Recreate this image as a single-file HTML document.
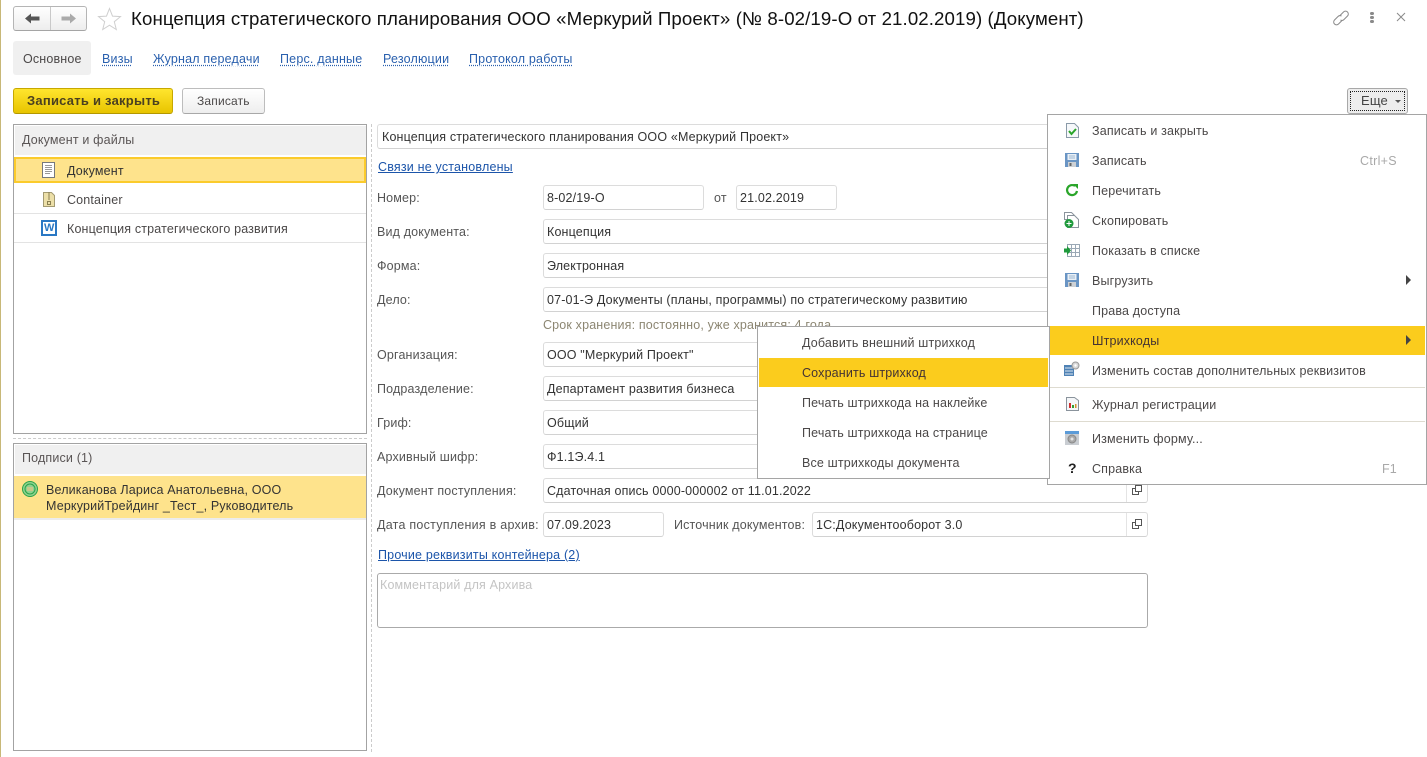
<!DOCTYPE html>
<html lang="ru"><head><meta charset="utf-8"><title>Документ</title>
<style>
html,body{margin:0;padding:0;background:#fff}
#p{position:relative;width:1427px;height:757px;overflow:hidden;background:#fff;font-family:"Liberation Sans",Arial,sans-serif;font-size:12.5px;color:#4b4848}
#p div,#p a,#p svg{position:absolute}
.t{white-space:nowrap;line-height:16px;height:16px;letter-spacing:.16px}
.d{color:#333}
.l{color:#1c55aa;text-decoration:underline;letter-spacing:.19px}
.tb{color:#2a60ae;text-decoration:underline dotted #2a60ae;text-underline-offset:2px;line-height:14px;white-space:nowrap;letter-spacing:.19px}
.f{box-sizing:border-box;background:#fff;border:1px solid #dcdcdc;border-radius:3px;height:25px;border-bottom-color:#d2d2d2}
.f span{position:absolute;left:3px;top:4px;white-space:nowrap;line-height:16px;color:#333;letter-spacing:.16px}
.lb{color:#555}
.m{color:#4b4848}
</style></head><body><div id="p">
<div style="left:0;top:0;width:1px;height:757px;background:#c8b878"></div>

<!-- nav -->
<div style="left:13px;top:6px;width:74px;height:25px;box-sizing:border-box;border:1px solid #b5b5b5;border-bottom-color:#a5a5a5;border-radius:3px;background:linear-gradient(#fff,#ededed)"></div>
<div style="left:50px;top:7px;width:1px;height:23px;background:#c9c9c9"></div>
<svg style="left:24px;top:12px" width="17" height="13" viewBox="0 0 17 13"><path d="M1 6.500L7 1.500v3h8.500v4H7v3z" fill="#555"/></svg>
<svg style="left:60px;top:12px" width="17" height="13" viewBox="0 0 17 13"><path d="M16 6.500L10 1.500v3H1.500v4H10v3z" fill="#aaa"/></svg>
<svg style="left:97px;top:7px" width="26" height="24" viewBox="0 0 26 24"><path d="M12.500 1.500l3 7.600 8 .5-6.200 5.100 2 7.800-6.800-4.300-6.800 4.300 2-7.800L1.500 9.600l8-.5z" fill="#fff" stroke="#cfcfcf"/></svg>
<div class="t" style="left:131px;top:8px;height:22px;line-height:22px;font-size:18.67px;color:#111;letter-spacing:.1px">Концепция стратегического планирования ООО «Меркурий Проект» (№ 8-02/19-О от 21.02.2019) (Документ)</div>
<svg style="left:1332px;top:9px" width="18" height="18" viewBox="0 0 18 18" fill="none" stroke="#8a8a8a" stroke-width="1"><path d="M8 6.500L11.500 3a2.800 2.800 0 0 1 4 4l-3.500 3.500a2.800 2.800 0 0 1-3.500.4"/><path d="M10 11.500L6.500 15a2.800 2.800 0 0 1-4-4L6 7.500a2.800 2.800 0 0 1 3.500-.4"/></svg>
<div style="left:1370px;top:12px;width:4px;height:3px;background:#8a8a8a;border-radius:2px"></div>
<div style="left:1370px;top:16px;width:4px;height:3px;background:#8a8a8a;border-radius:2px"></div>
<div style="left:1370px;top:20px;width:4px;height:3px;background:#8a8a8a;border-radius:2px"></div>
<svg style="left:1395px;top:11px" width="12" height="12" viewBox="0 0 12 12"><path d="M2 2l8 8M10 2l-8 8" stroke="#8a8a8a" stroke-width="1"/></svg>

<!-- tabs -->
<div style="left:13px;top:41px;width:78px;height:34px;background:#f0f0f0;border-radius:3px"></div>
<div class="t" style="left:23px;top:51px">Основное</div>
<div class="tb" style="left:102px;top:52px">Визы</div>
<div class="tb" style="left:153px;top:52px">Журнал передачи</div>
<div class="tb" style="left:280px;top:52px">Перс. данные</div>
<div class="tb" style="left:383px;top:52px">Резолюции</div>
<div class="tb" style="left:469px;top:52px">Протокол работы</div>

<!-- buttons -->
<div style="left:13px;top:88px;width:160px;height:26px;box-sizing:border-box;border:1px solid #c7a800;border-bottom-color:#b39700;border-radius:3px;background:linear-gradient(#ffe52e,#e8c400)"></div>
<div class="t" style="left:27px;top:93px;font-size:13px;font-weight:bold;color:#4a4020;letter-spacing:.24px">Записать и закрыть</div>
<div style="left:182px;top:88px;width:83px;height:26px;box-sizing:border-box;border:1px solid #bdbdbd;border-bottom-color:#a8a8a8;border-radius:3px;background:linear-gradient(#fff,#eee)"></div>
<div class="t" style="left:197px;top:93px;font-size:12px;letter-spacing:.18px">Записать</div>
<div style="left:1347px;top:88px;width:61px;height:26px;box-sizing:border-box;border:1px solid #a8a8a8;border-radius:3px;background:#ededed"></div>
<div style="left:1350px;top:91px;width:55px;height:20px;box-sizing:border-box;border:1px dotted #222"></div>
<div class="t" style="left:1361px;top:93px;font-size:13px;color:#444">Еще</div>
<svg style="left:1395px;top:100px" width="7" height="4"><path d="M0 0h6L3 3z" fill="#555"/></svg>

<!-- left panel 1 -->
<div style="left:13px;top:124px;width:354px;height:310px;box-sizing:border-box;border:1px solid #a3a3a3;background:#fff"></div>
<div style="left:15px;top:126px;width:351px;height:29px;background:#f0f0f0"></div>
<div class="t" style="left:22px;top:132px;color:#5a5555">Документ и файлы</div>
<div style="left:14px;top:157px;width:352px;height:26px;box-sizing:border-box;border:2px solid #fbcb2c;background:#fee38c"></div>
<svg style="left:42px;top:162px" width="13" height="16" viewBox="0 0 13 16"><rect x=".5" y=".5" width="12" height="15" fill="#fff" stroke="#76797c"/><path d="M3 3.500h7M3 5.500h7M3 7.500h7M3 9.500h7M3 11.500h5" stroke="#999"/></svg>
<div class="t d" style="left:67px;top:163px">Документ</div>
<div style="left:14px;top:213px;width:352px;height:1px;background:#e3e3e3"></div>
<svg style="left:43px;top:192px" width="12" height="15" viewBox="0 0 12 15"><path d="M.5.500h8l3 3v11H.5z" fill="#ecdfa8" stroke="#a39a72"/><path d="M5 1h2M5 3h2M5 5h2M5 7h2" stroke="#8a7f50"/><rect x="4.500" y="9.500" width="3" height="3" fill="none" stroke="#8a7f50"/></svg>
<div class="t" style="left:67px;top:192px">Container</div>
<div style="left:14px;top:242px;width:352px;height:1px;background:#e3e3e3"></div>
<div style="left:41px;top:220px;width:16px;height:16px;box-sizing:border-box;border:2px solid #2a78c4;background:#fff"></div>
<div style="left:44px;top:223px;font:bold 11px/11px 'Liberation Sans',sans-serif;color:#2a78c4;white-space:nowrap">W</div>
<div class="t" style="left:67px;top:221px">Концепция стратегического развития</div>

<!-- splitters -->
<div style="left:13px;top:438px;width:354px;border-top:1px dashed #ccc"></div>
<div style="left:371px;top:124px;height:628px;border-left:1px dashed #ccc"></div>

<!-- left panel 2 -->
<div style="left:13px;top:443px;width:354px;height:308px;box-sizing:border-box;border:1px solid #a3a3a3;background:#fff"></div>
<div style="left:15px;top:445px;width:351px;height:29px;background:#f0f0f0"></div>
<div class="t" style="left:22px;top:450px;color:#5a5555">Подписи (1)</div>
<div style="left:14px;top:476px;width:352px;height:42px;background:#fee38c"></div>
<div style="left:14px;top:518px;width:352px;height:2px;background:#ececec"></div>
<svg style="left:22px;top:481px" width="16" height="16" viewBox="0 0 16 16" fill="none"><circle cx="8" cy="8" r="7.500" fill="#8fd28f" stroke="#2aa34a"/><circle cx="8" cy="8" r="5" stroke="#2aa34a"/><rect x="5" y="6" width="6" height="4" fill="#c8c88a"/></svg>
<div class="t d" style="left:46px;top:482px">Великанова Лариса Анатольевна, ООО</div>
<div class="t d" style="left:46px;top:498px">МеркурийТрейдинг _Тест_, Руководитель</div>

<!-- form -->
<div class="f" style="left:377px;top:124px;width:771px"><span style="left:4px">Концепция стратегического планирования ООО «Меркурий Проект»</span></div>
<div class="t l" style="left:378px;top:159px">Связи не установлены</div>

<div class="t lb" style="left:377px;top:190px">Номер:</div>
<div class="f" style="left:543px;top:185px;width:161px"><span>8-02/19-О</span></div>
<div class="t lb" style="left:714px;top:190px">от</div>
<div class="f" style="left:736px;top:185px;width:101px"><span>21.02.2019</span></div>

<div class="t lb" style="left:377px;top:224px">Вид документа:</div>
<div class="f" style="left:543px;top:219px;width:605px"><span>Концепция</span></div>
<div class="t lb" style="left:377px;top:258px">Форма:</div>
<div class="f" style="left:543px;top:253px;width:605px"><span>Электронная</span></div>
<div class="t lb" style="left:377px;top:292px">Дело:</div>
<div class="f" style="left:543px;top:287px;width:605px"><span>07-01-Э Документы (планы, программы) по стратегическому развитию</span></div>
<div class="t" style="left:543px;top:317px;color:#8c8672">Срок хранения: постоянно, уже хранится: 4 года</div>
<div class="t lb" style="left:377px;top:347px">Организация:</div>
<div class="f" style="left:543px;top:342px;width:605px"><span>ООО "Меркурий Проект"</span></div>
<div class="t lb" style="left:377px;top:381px">Подразделение:</div>
<div class="f" style="left:543px;top:376px;width:605px"><span>Департамент развития бизнеса</span></div>
<div class="t lb" style="left:377px;top:415px">Гриф:</div>
<div class="f" style="left:543px;top:410px;width:605px"><span>Общий</span></div>
<div class="t lb" style="left:377px;top:449px">Архивный шифр:</div>
<div class="f" style="left:543px;top:444px;width:605px"><span>Ф1.1Э.4.1</span></div>
<div class="t lb" style="left:377px;top:483px">Документ поступления:</div>
<div class="f" style="left:543px;top:478px;width:605px"><span>Сдаточная опись 0000-000002 от 11.01.2022</span></div>
<div style="left:1126px;top:479px;width:1px;height:23px;background:#e4e4e4"></div>
<svg style="left:1132px;top:485px" width="11" height="11" viewBox="0 0 11 11" fill="none" stroke="#555"><rect x="3.500" y=".5" width="6" height="6" fill="#fff"/><path d="M3.500 3.500H.5v6h6v-3"/></svg>

<div class="t lb" style="left:377px;top:517px;letter-spacing:.25px">Дата поступления в архив:</div>
<div class="f" style="left:543px;top:512px;width:121px"><span>07.09.2023</span></div>
<div class="t lb" style="left:674px;top:517px">Источник документов:</div>
<div class="f" style="left:812px;top:512px;width:336px"><span>1С:Документооборот 3.0</span></div>
<div style="left:1126px;top:513px;width:1px;height:23px;background:#e4e4e4"></div>
<svg style="left:1132px;top:519px" width="11" height="11" viewBox="0 0 11 11" fill="none" stroke="#555"><rect x="3.500" y=".5" width="6" height="6" fill="#fff"/><path d="M3.500 3.500H.5v6h6v-3"/></svg>

<div class="t l" style="left:378px;top:547px">Прочие реквизиты контейнера (2)</div>
<div style="left:377px;top:573px;width:771px;height:55px;box-sizing:border-box;border:1px solid #aaa;border-radius:3px;background:#fff"></div>
<div class="t" style="left:380px;top:577px;color:#c4c4c4">Комментарий для Архива</div>

<!-- main menu -->
<div style="left:1047px;top:114px;width:380px;height:371px;box-sizing:border-box;border:1px solid #a5a5a5;background:#fff"></div>
<div style="left:1050px;top:326px;width:375px;height:29px;background:#fbcc1d"></div>
<div style="left:1050px;top:387px;width:375px;height:1px;background:#dedbd0"></div>
<div style="left:1050px;top:421px;width:375px;height:1px;background:#dedbd0"></div>

<div class="t m" style="left:1092px;top:123px">Записать и закрыть</div>
<div class="t m" style="left:1092px;top:153px">Записать</div>
<div class="t" style="left:1360px;top:153px;color:#a9a9a9;letter-spacing:.3px">Ctrl+S</div>
<div class="t m" style="left:1092px;top:183px">Перечитать</div>
<div class="t m" style="left:1092px;top:213px">Скопировать</div>
<div class="t m" style="left:1092px;top:243px">Показать в списке</div>
<div class="t m" style="left:1092px;top:273px">Выгрузить</div>
<div class="t m" style="left:1092px;top:303px">Права доступа</div>
<div class="t m" style="left:1092px;top:333px;color:#433">Штрихкоды</div>
<div class="t m" style="left:1092px;top:363px">Изменить состав дополнительных реквизитов</div>
<div class="t m" style="left:1092px;top:397px">Журнал регистрации</div>
<div class="t m" style="left:1092px;top:431px">Изменить форму...</div>
<div class="t m" style="left:1092px;top:461px">Справка</div>
<div class="t" style="left:1382px;top:461px;color:#a9a9a9">F1</div>
<svg style="left:1406px;top:274px" width="6" height="12"><path d="M0 1l5 5-5 5z" fill="#444"/></svg>
<svg style="left:1406px;top:334px" width="6" height="12"><path d="M0 1l5 5-5 5z" fill="#444"/></svg>

<svg style="left:1066px;top:123px" width="13" height="15" viewBox="0 0 13 15"><path d="M.5.500h8l4 4v10H.5z" fill="#f6f8fa" stroke="#8a9aa8"/><path d="M3 8l2.500 3L10 6" fill="none" stroke="#2aa52a" stroke-width="2"/></svg>
<svg style="left:1065px;top:153px" width="14" height="14" viewBox="0 0 14 14"><path d="M0 0h14v14H0z" fill="#6a95c4"/><rect x="2.500" y="1" width="9" height="6" fill="#eaf0f6"/><path d="M4 3h6M4 5h6" stroke="#9fb8d2"/><rect x="3" y="9" width="8" height="5" fill="#cdd1d5"/><rect x="4.500" y="10" width="2" height="3" fill="#666"/></svg>
<svg style="left:1065px;top:183px" width="14" height="14" viewBox="0 0 14 14" fill="none"><path d="M12 8A5 5 0 1 1 10 3" stroke="#2aa52a" stroke-width="2.200"/><path d="M8 1h5v5z" fill="#2aa52a"/></svg>
<svg style="left:1064px;top:212px" width="15" height="16" viewBox="0 0 15 16"><path d="M.5.500h7l3 3v4h-10z" fill="#fff" stroke="#8a939c"/><path d="M3.500 3.500h7l4 4v8h-11z" fill="#fff" stroke="#8a939c"/><circle cx="5" cy="11.500" r="4.500" fill="#1f9a3c"/><path d="M2.500 11.500h5M5 9v5" stroke="#fff"/></svg>
<svg style="left:1064px;top:244px" width="16" height="13" viewBox="0 0 16 13"><path d="M3.500.5h12v12h-12z" fill="#fff" stroke="#9aa8b5"/><path d="M4 4.500h11M4 8.500h11M7.500 1v11M11.500 1v11" stroke="#9aa8b5"/><path d="M0 4.500h3V2l4 4.500L3 11V8.500H0z" fill="#1f9a3c"/></svg>
<svg style="left:1065px;top:273px" width="14" height="14" viewBox="0 0 14 14"><path d="M0 0h14v14H0z" fill="#6a95c4"/><rect x="2.500" y="1" width="9" height="6" fill="#eaf0f6"/><path d="M4 3h6M4 5h6" stroke="#9fb8d2"/><rect x="3" y="9" width="8" height="5" fill="#cdd1d5"/><rect x="4.500" y="10" width="2" height="3" fill="#666"/></svg>
<svg style="left:1064px;top:361px" width="16" height="16" viewBox="0 0 16 16"><rect x="0" y="4" width="10" height="11" fill="#4f82b5"/><path d="M1 7h8M1 10h8M1 13h8" stroke="#dde6ee"/><circle cx="11.500" cy="4.500" r="3.500" fill="#d8d8d8" stroke="#999"/><circle cx="11.500" cy="4.500" r="1.200" fill="#fff"/></svg>
<svg style="left:1066px;top:397px" width="13" height="14" viewBox="0 0 13 14"><path d="M.5.500h8l4 3v10H.5z" fill="#f4f6f8" stroke="#8a939c"/><rect x="3" y="6" width="2" height="5" fill="#d03030"/><rect x="6" y="8" width="2" height="3" fill="#30a030"/><rect x="9" y="7" width="1.500" height="4" fill="#d09030"/></svg>
<svg style="left:1065px;top:431px" width="14" height="14" viewBox="0 0 14 14"><rect width="14" height="14" fill="#c9cdd2"/><rect width="14" height="3" fill="#5b9bd8"/><circle cx="7" cy="8" r="4" fill="#a8a8a8" stroke="#888"/><circle cx="7" cy="8" r="1.500" fill="#e4e4e4"/></svg>
<div style="left:1068px;top:460px;font:bold 14px/16px 'Liberation Sans',sans-serif;color:#222">?</div>

<!-- submenu -->
<div style="left:757px;top:326px;width:293px;height:153px;box-sizing:border-box;border:1px solid #a5a5a5;background:#fff"></div>
<div style="left:759px;top:358px;width:289px;height:29px;background:#fbcc1d"></div>
<div class="t m" style="left:802px;top:335px">Добавить внешний штрихкод</div>
<div class="t m" style="left:802px;top:365px;color:#433">Сохранить штрихкод</div>
<div class="t m" style="left:802px;top:395px">Печать штрихкода на наклейке</div>
<div class="t m" style="left:802px;top:425px">Печать штрихкода на странице</div>
<div class="t m" style="left:802px;top:455px">Все штрихкоды документа</div>
</div></body></html>
